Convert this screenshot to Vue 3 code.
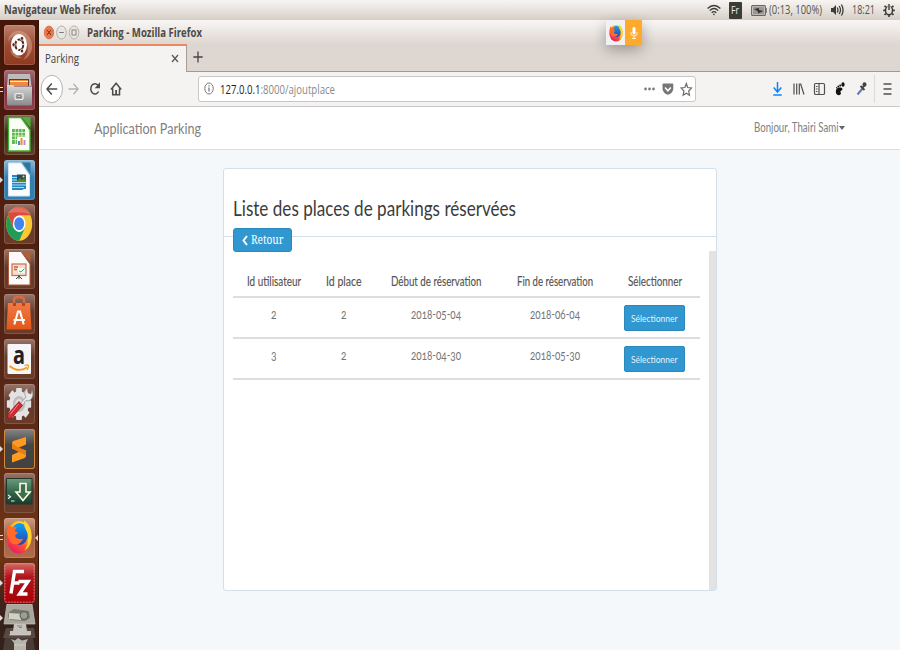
<script setup>
import { h } from 'vue'

// A line of real text set to an exact width, with its baseline at the font size.
// `lead` is an optional darker start of the same line.
const Fit = (p) =>
  h('svg', { class: 'fit', width: p.w, height: p.s * 1.3, style: { fontSize: p.s + 'px' } }, [
    h('text', { x: 0, y: p.s, textLength: p.w, lengthAdjust: 'spacingAndGlyphs', fill: 'currentColor' },
      p.lead ? [h('tspan', { fill: '#222' }, p.lead), p.t] : p.t),
  ])
Fit.props = ['t', 'w', 's', 'lead']

const headers = [
  { t: 'Id utilisateur', w: 54 },
  { t: 'Id place', w: 35.5 },
  { t: 'Début de réservation', w: 90.5 },
  { t: 'Fin de réservation', w: 76 },
  { t: 'Sélectionner', w: 54 },
]
const rows = [
  { user: '2', place: '2', start: '2018-05-04', end: '2018-06-04' },
  { user: '3', place: '2', start: '2018-04-30', end: '2018-05-30' },
]
const teeth = [0, 45, 90, 135, 180, 225, 270, 315]
</script>

<template>
  <div class="desktop">
    <svg class="defs" width="0" height="0">
      <defs>
        <linearGradient id="ffBody" x1="0.8" y1="0" x2="0.25" y2="1">
          <stop offset="0" stop-color="#fff044" /><stop offset=".35" stop-color="#ffb01e" />
          <stop offset=".65" stop-color="#ff4b38" /><stop offset="1" stop-color="#e3176c" />
        </linearGradient>
        <linearGradient id="ffGlobe" x1="0" y1="0" x2="0" y2="1">
          <stop offset="0" stop-color="#0aa5f5" /><stop offset="1" stop-color="#2b3fae" />
        </linearGradient>
        <linearGradient id="metal" x1="0" y1="0" x2="0" y2="1">
          <stop offset="0" stop-color="#d8d8d8" /><stop offset="1" stop-color="#898989" />
        </linearGradient>
        <linearGradient id="bag" x1="0" y1="0" x2="0" y2="1">
          <stop offset="0" stop-color="#f27a47" /><stop offset="1" stop-color="#e25718" />
        </linearGradient>
        <linearGradient id="term" x1="0" y1="0" x2="0" y2="1">
          <stop offset="0" stop-color="#6d9a7f" /><stop offset=".5" stop-color="#346b4c" /><stop offset="1" stop-color="#173c2b" />
        </linearGradient>
        <symbol id="firefox" viewBox="0 0 26 35" preserveAspectRatio="none">
          <ellipse cx="13" cy="18" rx="12.4" ry="16.2" fill="url(#ffBody)" />
          <ellipse cx="13.8" cy="14.4" rx="8.3" ry="11" fill="url(#ffGlobe)" />
          <path d="M1 15C1 9 2 7 3.5 4.5L5 8q3-1.500 6 0-2 1.500-2 4l3 1-3 3c1 4 5 4 8 3-1 5-8 8-12 4z" fill="#ff6a2b" />
          <path d="M18 1c6 4 8 10 7.500 17-.5 6-3 11-7 13 4-6 4-12 3-17-1-4-4-6-3.500-13z" fill="#ffd52d" />
        </symbol>
      </defs>
    </svg>

    <header class="panel">
      <Fit class="bold" t="Navigateur Web Firefox" :w="112" :s="12" />
      <div class="tray">
        <svg class="wifi" width="14" height="12" viewBox="0 0 14 12" fill="none" stroke="#3c3b37" stroke-width="1.300">
          <path d="M.6 4.500Q7-1.500 13.400 4.500M2.700 6.600Q7 2.500 11.300 6.600M4.700 8.700Q7 6.500 9.300 8.700" /><path d="M5.800 9.700h2.400L7 11.500z" fill="#3c3b37" stroke="none" />
        </svg>
        <span class="lang"><Fit t="Fr" :w="8" :s="11" /></span>
        <svg class="battery" width="16" height="11" viewBox="0 0 16 11">
          <rect x=".6" y=".6" width="13.800" height="9.800" rx="1" fill="#d6d2cd" stroke="#666" stroke-width="1.100" /><path d="M15 3v5" stroke="#666" stroke-width="1.500" />
          <rect x="2" y="2" width="11" height="7" fill="#9a9894" /><path d="M3 4l5-1v2l4.500 1L7 8.500V6.500z" fill="#333" />
        </svg>
        <Fit class="power" t="(0:13, 100%)" :w="53" :s="12" />
        <svg class="sound" width="14" height="14" viewBox="0 0 14 14" fill="none" stroke="#3c3b37" stroke-width="1.300">
          <path d="M1 5h2l3-3v10L3 9H1z" fill="#3c3b37" stroke="none" /><path d="M7.200 4.500q1.500 2.500 0 5M9.200 3q2.600 4 0 8M11.400 1.500q3.400 5.500 0 11" />
        </svg>
        <Fit class="clock" t="18:21" :w="23" :s="12" />
        <svg class="gear" width="12" height="14" viewBox="0 0 12 14" fill="none" stroke="#3c3b37">
          <ellipse cx="6" cy="7.400" rx="3.500" ry="4.300" stroke-width="1.500" />
          <path d="M6 12v2M2.800 10.500l-1.200 1.600M9.200 10.500l1.200 1.600M2 7.400H.2M10 7.400h1.800M2.800 4.300L1.600 2.700M9.200 4.300l1.200-1.600" stroke-width="1.600" />
          <path d="M6 1.500v4.500" stroke="#e5e0da" stroke-width="3.200" /><path d="M6 1v6" stroke-width="1.400" />
        </svg>
      </div>
    </header>

    <div class="workspace">
      <nav class="launcher">
        <div class="tile ubuntu">
          <svg viewBox="0 0 31 40">
            <path d="M4 17C5 4 19 2 26 13c5 9 1 19-7 22 7-7 6-17 0-22-5-5-12-3-15 4zM6 25c2 6 6 9 12 8-3-1-6-3-7-6z" fill="#d8a48d" opacity=".55" />
            <ellipse cx="15" cy="19.700" rx="8" ry="10.800" fill="#fff" />
            <ellipse cx="15.300" cy="19.700" rx="4" ry="5.300" fill="none" stroke="#54271b" stroke-width="2" stroke-dasharray="8.200 1.600" />
            <g fill="#54271b" stroke="#fff" stroke-width=".7"><ellipse cx="9.600" cy="19.700" rx="1.600" ry="2" /><ellipse cx="18" cy="13.400" rx="1.600" ry="2" /><ellipse cx="18" cy="26" rx="1.600" ry="2" /></g>
          </svg>
        </div>
        <div class="tile files">
          <svg viewBox="0 0 31 40">
            <path d="M4 4h22l1.500 12H3z" fill="#bcbcbc" /><path d="M5 9h20v7H5z" fill="#60382c" />
            <path d="M6 10h18v6H6z" fill="#ef8a3d" /><path d="M6 11.500h18" stroke="#fff0c0" />
            <path d="M3 15h6l1.500 1.500H28V34q0 1.500-1.500 1.500h-22Q3 35.500 3 34z" fill="url(#metal)" />
            <rect x="11" y="23.500" width="8" height="6" rx="1" fill="#aaa" stroke="#eee" stroke-width="1.200" /><path d="M13 26h4v1.500h-4z" fill="#fff" stroke="#555" stroke-width=".7" />
          </svg>
          <i class="pip double"></i>
        </div>
        <div class="tile calc">
          <svg viewBox="0 0 31 40">
            <path d="M4.500 2.500H17L26 15v21H4.500z" fill="#f8fff4" stroke="#43ae2d" stroke-width="1.300" /><path d="M18 2h8.500v11z" fill="#4caf37" />
            <path d="M8 14h13v15H8z" fill="#5fb84e" /><path d="M8 17.500h13M8 21h13M8 24.500h13M11.300 14v15M14.600 14v15M18 14v15" stroke="#e1f7dc" stroke-width=".8" />
            <path d="M13 22h9v8h-9z" fill="#fff" /><path d="M14 30v-4h2v4" fill="#3b8cd8" /><path d="M16.500 30v-7h2v7" fill="#f08a2b" /><path d="M19.500 30v-5h2v5" fill="#b98bd0" />
          </svg>
        </div>
        <div class="tile writer">
          <svg viewBox="0 0 31 40">
            <path d="M4.500 3H17l8.500 12v21h-21z" fill="#fbfcfd" stroke="#d3e4f0" /><path d="M18 2.500h8.500v11z" fill="#2a76a5" />
            <path d="M8 15h14v14H20l-2 1H8z" fill="#2588be" /><path d="M8 17.500h5M8 20h5M8 22.500h14M8 25h14M8 27.500h12" stroke="#d9effb" stroke-width=".8" />
            <path d="M13 14.500h8.500v7.500H13z" fill="#284f61" /><path d="M13 21l3-3 2 2 2-1.500 1.500 1.500v2H13z" fill="#578b28" /><circle cx="19.500" cy="16.500" r="1" fill="#ffd15d" />
          </svg>
          <i class="pip"></i>
        </div>
        <div class="tile glass">
          <svg viewBox="0 0 31 40">
            <g transform="translate(15.200 19.700) scale(.765 1)">
              <circle r="17" fill="#fac832" /><path d="M-14.700-8.500A17 17 0 0 1 14.700-8.500L0-8.500-7.400 4.200z" fill="#dd4a3b" />
              <path d="M-14.700-8.500A17 17 0 0 0 0 17L7.400 4.200 0 8.500-7.400 4.200z" fill="#1f9d58" />
              <circle r="8.300" fill="#fff" /><circle r="6.500" fill="#4383f0" />
            </g>
            <path d="M3 9Q15-3 27 10q-12-3-24-1z" fill="#fff" opacity=".2" />
          </svg>
        </div>
        <div class="tile glass">
          <svg viewBox="0 0 31 40">
            <path d="M4.500 2.500H17L26 15v21H4.500z" fill="#fcfaf8" stroke="#a65c3d" /><path d="M18 2h8.500v11z" fill="#b06037" />
            <rect x="8" y="15" width="14" height="11.500" fill="#f8ded0" stroke="#cc6a4a" stroke-width="1.200" /><path d="M10 18h4M10 20.500h3" stroke="#c0613d" stroke-width="1.300" />
            <path d="M14 19h7v5h-7z" fill="#f4fff4" /><path d="M15 22l2 1 3.500-3.500" stroke="#4aa868" fill="none" /><path d="M12 30l3-3 3 3M15 26v4" stroke="#444" fill="none" />
          </svg>
        </div>
        <div class="tile glass">
          <svg viewBox="0 0 31 40">
            <path d="M10 11V6q0-3 5-3t5 3v5" fill="none" stroke="#d86a42" stroke-width="2.500" /><path d="M4 9h22l1.500 26.500h-25z" fill="url(#bag)" /><path d="M9 9h3v3H9zM18 9h3v3h-3z" fill="#b94417" />
            <path d="M10.300 30.500L14 17.500h2l3.700 13M9.500 26h11.500" fill="none" stroke="#fff" stroke-width="2" />
          </svg>
        </div>
        <div class="tile glass">
          <svg class="amazon" viewBox="0 0 31 40">
            <rect x="3.500" y="5" width="23.500" height="30" rx="1" fill="#f6f6f6" />
            <text x="9" y="25" font-family="Open Sans" font-weight="700" font-size="25" textLength="12" lengthAdjust="spacingAndGlyphs" fill="#222">a</text>
            <path d="M5.500 27Q14 34 23 28.500" fill="none" stroke="#f79a1c" stroke-width="1.800" /><path d="M20.500 26.500q4-1.500 4 .5t-1.500 4" fill="none" stroke="#f79a1c" stroke-width="1.300" />
          </svg>
        </div>
        <div class="tile glass">
          <svg viewBox="0 0 31 40">
            <g transform="translate(15 20) scale(.76 1)" fill="#e2e2e2"><rect v-for="a in teeth" :key="a" x="-3.800" y="-16" width="7.600" height="8" rx="1" :transform="`rotate(${a})`" /><circle r="13" /><circle r="8" fill="#bdbdbd" /><circle r="5" fill="#dfdfdf" /></g>
            <path d="M15 21l7-8q-3-5 1-9l1 5 3 1 1-4q3 7-3 11l-3-.5-5 7z" fill="#e7e7e7" stroke="#888" stroke-width=".7" />
            <path d="M15 17.500l3.500 4L7.500 34q-3 2-4-1-.5-2 1-3.500z" fill="#d12b32" stroke="#941820" stroke-width=".8" /><path d="M14.500 20L6 30.500" stroke="#ff8888" />
          </svg>
        </div>
        <div class="tile sublime">
          <svg viewBox="0 0 31 40"><path d="M22 8v7.500l-7.500 3.300L22 21.500V27q0 1.500-2 2.200L8 33.500V26l7.500-3.500L8 19.500V14q0-1.500 2-2.300z" fill="#ff9b20" /><path d="M8 19.500l14 7v-5l-7.500-2.700L8 14z" fill="#e87d12" /></svg>
          <i class="pip"></i>
        </div>
        <div class="tile glass">
          <svg viewBox="0 0 31 40">
            <path d="M2.500 5.500h25.500V31H2.500z" fill="url(#term)" stroke="#23382b" /><path d="M4 22l2.500 1.800L4 25.700M7 28h3.500" fill="none" stroke="#e8eee9" stroke-width="1.200" />
            <path d="M16 10.500h6v8.500h4L19 27.500 12 19h4z" fill="#3d6e50" stroke="#fffde2" stroke-width="1.600" />
          </svg>
        </div>
        <div class="tile fox">
          <svg viewBox="0 0 31 40"><use href="#firefox" x="2" y="1.500" width="26" height="35" /></svg>
          <i class="pip double"></i><i class="pip right"></i>
        </div>
        <div class="tile zilla">
          <svg viewBox="0 0 31 40">
            <rect x="1" y="1" width="29" height="38" rx="2" fill="none" stroke="#e78a8a" stroke-width=".8" stroke-dasharray="1.500 1.500" />
            <path d="M7 30.500L10.500 8.500H20M8.500 20h7M14.500 18.500H24L15.500 31H23.500" fill="none" stroke="#fff" stroke-width="3.400" />
          </svg>
          <i class="pip"></i>
        </div>
        <div class="stack">
          <svg width="35" height="46" viewBox="0 0 35 46">
            <path d="M5 0h25l3 20H2z" fill="#aaa69d" stroke="#c9c5ba" stroke-width=".7" /><path d="M7 8l5-3 15 2 1 7-5 3-15-1-2-4z" fill="#777a6d" /><path d="M7 9l14 1-2 6-12-1z" fill="#d0d1c4" /><ellipse cx="22" cy="11.500" rx="4" ry="4" fill="#9b9f90" stroke="#575b50" />
            <path d="M4 24h28l1.500 10H1z" fill="#776963" opacity=".55" /><path d="M12 20h12l1 7h4v4H8v-4h3z" fill="#c6c2bc" /><path d="M15 22h5M17 23.500h3" stroke="#777" stroke-width=".8" /><path d="M3 34h28l2 12H1z" fill="#4b3b36" />
            <path d="M9 35l4 1.500 3-2.500 4 2.500 6-1.500-2 4v7H12v-7z" fill="#b8b4ae" /><path d="M7 31h21M12 41h12" stroke="#ddd" opacity=".6" />
          </svg>
          <i class="pip"></i>
        </div>
      </nav>

      <section class="browser">
        <div class="titlebar">
          <svg width="42" height="16" viewBox="0 0 42 16">
            <g stroke="#b9b0a6" fill="#e9e5e0"><ellipse cx="7" cy="8.500" rx="4.700" ry="6.400" fill="#ef7446" stroke="#cf7c5e" /><ellipse cx="19.500" cy="8.500" rx="4.800" ry="6.500" /><ellipse cx="32" cy="8.500" rx="4.800" ry="6.500" /></g>
            <path d="M5.100 6l3.800 5M8.900 6l-3.800 5" stroke="#703622" /><path d="M17.300 8.500h4.500" stroke="#777" /><rect x="30" y="6" width="4" height="5" fill="none" stroke="#888" />
          </svg>
          <Fit class="bold title" t="Parking - Mozilla Firefox" :w="115" :s="12" />
        </div>
        <div class="tabs">
          <div class="tab">
            <Fit t="Parking" :w="34" :s="12" />
            <svg width="8" height="9" viewBox="0 0 8 9"><path d="M1 1l6 7M7 1L1 8" stroke="#555" stroke-width="1.200" /></svg>
          </div>
          <div class="strip"><svg width="10" height="12" viewBox="0 0 10 12"><path d="M5 .5v11M.3 6h9.400" stroke="#444" stroke-width="1.300" /></svg></div>
        </div>
        <div class="toolbar">
          <svg class="navicons" width="86" height="30" viewBox="0 0 86 30" fill="none" stroke="#4c4c4e" stroke-width="1.500">
            <ellipse cx="12.800" cy="15" rx="10.700" ry="13.700" fill="#fff" stroke="#b5b2b0" stroke-width="1" />
            <path d="M18.200 15H8M12.800 9.500L8 15l4.800 5.500" /><path d="M29.500 15h9.500M34.500 9.800l4.600 5.200-4.600 5.200" stroke="#b4b3b3" stroke-width="1.300" />
            <path d="M59.600 17.500A4.200 5.200 0 1 1 59 11.200" /><path d="M61 8.300v6h-5.300z" fill="#4c4c4e" stroke="none" />
            <path d="M72 15.500l5.100-6.300 5.100 6.300M73.700 14.500v6.200h6.800v-6.200" stroke-width="1.500" /><path d="M77.100 21v-5" stroke-width="1.800" />
          </svg>
          <div class="url">
            <svg width="10" height="13" viewBox="0 0 10 13" fill="none" stroke="#777"><ellipse cx="5" cy="6.500" rx="4.200" ry="5.500" /><path d="M5 5.500v4M5 3.200v1.300" stroke-width="1.300" /></svg>
            <Fit class="address" lead="127.0.0.1" t=":8000/ajoutplace" :w="115" :s="12" />
            <svg class="urlicons" width="50" height="16" viewBox="0 0 50 16">
              <g fill="#777"><ellipse cx="2.500" cy="8" rx="1.300" ry="1.400" /><ellipse cx="6.500" cy="8" rx="1.300" ry="1.400" /><ellipse cx="10.500" cy="8" rx="1.300" ry="1.400" /><path d="M20.500 2.500h8.800q1 0 1 1V8q-.8 4.500-5.400 5.700Q20.300 12.500 19.500 8V3.500q0-1 1-1z" /></g>
              <path d="M22 6.500l2.900 3.300 2.900-3.300" stroke="#fff" stroke-width="1.500" fill="none" /><path d="M43.300 2.500l1.400 4 3.800.5-2.800 3 .8 4.300-3.200-2.100-3.200 2.100.8-4.300-2.800-3 3.800-.5z" stroke="#6c6c6c" stroke-width="1.200" fill="none" />
            </svg>
          </div>
          <svg class="tools" width="126" height="30" viewBox="0 0 126 30" fill="none" stroke="#505052" stroke-width="1.200">
            <path d="M8.500 8v9.500M4.700 13.500l3.800 4.500 3.800-4.500M4.300 21h8.400" stroke="#0a84ff" stroke-width="1.500" />
            <path d="M25 9.500v11M27.700 9.500v11M30.300 9.500v11M31.500 9.500l3.500 11" stroke-width="1.200" />
            <rect x="45.500" y="9.500" width="10" height="11" rx="1.300" /><path d="M50 9.500v11M47 12.500h1.500M47 15h1.500M47 17.500h1.500" />
            <g fill="#111" stroke="none"><path d="M67.500 15c2.500-2.500 6-1.500 6 0s-2 1.500-2.200 3c1 .2 1 3.200-1.500 3.200-3 0-3.600-4-2.300-6.200z" /><ellipse cx="74" cy="10.500" rx="1.600" ry="2.200" /><circle cx="71.200" cy="11.500" r="1" /><circle cx="69.300" cy="12.500" r=".9" /><circle cx="67.700" cy="13.700" r=".7" /></g>
            <path d="M88.500 20.500l5-6" stroke="#6675bb" stroke-width="2" /><path d="M91.500 12l4 4M93.500 14l2.500-3.500" stroke="#444" stroke-width="1.800" /><ellipse cx="95.500" cy="10.500" rx="2" ry="2.300" fill="#444" stroke="none" />
            <path d="M105.500 1v28" stroke="#dedcdb" /><path d="M114.500 10h8M114.500 15h8M114.500 20h8" stroke-width="1.500" />
          </svg>
        </div>

        <div class="sitebar">
          <Fit t="Application Parking" :w="107" :s="15.500" />
          <div class="user"><Fit t="Bonjour, Thairi Sami" :w="84.500" :s="12.500" /><i class="caret"></i></div>
        </div>
        <main class="page">
          <article class="card">
            <div class="cardhead"><Fit t="Liste des places de parkings réservées" :w="283" :s="20.500" /></div>
            <div class="cardbody">
              <div class="content">
                <button class="back"><svg width="6" height="11" viewBox="0 0 6 11"><path d="M5 1L1.500 5.500 5 10" fill="none" stroke="#fff" stroke-width="2" /></svg><Fit t="Retour" :w="32.500" :s="12" /></button>
                <div class="row head"><Fit v-for="c in headers" :key="c.t" :t="c.t" :w="c.w" :s="12.600" /></div>
                <div v-for="r in rows" :key="r.user" class="row">
                  <Fit :t="r.user" :w="5.500" :s="13.500" /><Fit :t="r.place" :w="5.500" :s="13.500" />
                  <Fit :t="r.start" :w="50" :s="13.500" /><Fit :t="r.end" :w="50" :s="13.500" />
                  <button class="select"><Fit t="Sélectionner" :w="46.500" :s="9.500" /></button>
                </div>
              </div>
              <div class="scroll"></div>
            </div>
          </article>
        </main>
      </section>
    </div>

    <div class="sharing">
      <div class="foxcell"><svg width="14" height="18"><use href="#firefox" width="14" height="18" /></svg></div>
      <div class="mic"><svg width="8" height="14" viewBox="0 0 8 14"><rect x="2.500" y="1" width="3" height="7.500" rx="1.500" fill="#fff" /><path d="M1 6v1.500q0 2.500 3 2.500t3-2.500V6M4 10v3M2 12.500h4" fill="none" stroke="#fff" stroke-width=".8" /></svg></div>
    </div>
  </div>
</template>

<style>
body { overflow: hidden; }
</style>

<style scoped>
* { box-sizing: border-box; }
.desktop { position: relative; width: 900px; height: 650px; overflow: hidden; display: flex; flex-direction: column; font-family: "Open Sans", "Noto Sans", sans-serif; color: #3c3b37; }
.defs { position: absolute; }
.fit { display: block; overflow: visible; flex: none; }
svg { flex: none; }
.bold { font-weight: 700; color: #4c4a46; }
.panel { height: 20px; flex: none; display: flex; justify-content: space-between; padding: 2px 5px 0 4px; background: linear-gradient(#f7f5f2, #e6e1dc 55%, #d6cec6); }
.tray { display: flex; align-items: flex-start; color: #55534f; }
.wifi { margin-top: 2px; }
.lang { width: 13px; height: 17px; margin: 0 9.500px 0 8px; padding: 1px 2.500px; background: #3c3b37; color: #eee; border-radius: 1px; }
.battery { margin-top: 3px; }
.power { margin-left: 2px; }
.sound { margin: 1px 0 0 8px; }
.clock { margin-left: 8px; }
.gear { margin: 1px 0 0 8px; }
.workspace { display: flex; height: 630px; }
.launcher { width: 39px; padding: 5px 0 0 4px; display: flex; flex-direction: column; gap: 4.85px; background: linear-gradient(#431609, #4c1c0e 20%, #572817 60%, #713413 85%, #3f241b 92%, #30201b); border-right: 1px solid #351309; }
.tile { position: relative; width: 31px; height: 40px; flex: none; border-radius: 3px; box-shadow: inset 0 0 0 1px #ffffff24; }
.tile > svg { display: block; width: 31px; height: 40px; }
.amazon { overflow: visible; }
.ubuntu { background: linear-gradient(#bc806c, #9c4b32 50%, #8e3a20); }
.files { background: linear-gradient(#a36b70, #7c3140 50%, #91404c); }
.calc { background: linear-gradient(#806657, #3d3018 45%, #5d402a); }
.writer { background: linear-gradient(#8bb9d5, #367fae 45%, #2f80b2); }
.glass { background: linear-gradient(#9a7468, #633a2b 45%, #6d3b28); }
.sublime { background: linear-gradient(#858585, #454545 40%, #414141); box-shadow: inset 0 0 0 1px #d18a39; }
.fox { background: linear-gradient(#cc9a80, #a15f42 45%, #b16e4d); }
.zilla { background: linear-gradient(#d66967, #af151a 35%, #a90008); }
.pip { position: absolute; left: -4px; top: 17px; border: 3px solid transparent; border-left-color: #ddd; border-right-width: 0; }
.double { width: 3px; height: 5px; border: 1px solid #ddd; border-width: 1px 0; }
.right { left: 31px; border-width: 3px 3px 3px 0; border-right-color: #ddd; }
.stack { position: relative; margin: -4px 0 0 -2px; height: 46px; flex: none; }
.stack .pip { left: -2px; top: 11px; }
.browser { width: 861px; display: flex; flex-direction: column; }
.titlebar { height: 24px; display: flex; padding: 4px 0 0 4px; background: linear-gradient(#f8f6f4, #ded7d1); }
.titlebar > svg { margin-left: -1px; }
.titlebar > .title { margin: 1px 0 0 3px; }
.tabs { height: 28px; display: flex; background: #ded7d1; }
.tab { width: 148px; display: flex; align-items: flex-start; justify-content: space-between; padding: 5px 7px 0 6px; background: #f4f3f2; border-top: 2px solid #ed875f; border-right: 1px solid #a69d94; color: #444; }
.tab > svg:last-child { margin-top: 3px; }
.strip { flex: 1; padding: 7px 0 0 6px; border-bottom: 1px solid #a39a8f; }
.strip svg { display: block; }
.toolbar { height: 35px; display: flex; align-items: flex-start; padding-top: 2px; background: #f4f3f2; border-bottom: 1px solid #cbc9c8; }
.url { width: 498px; height: 26px; margin: 2px 0 0 72.500px; padding: 0 2px 0 5px; display: flex; align-items: flex-start; background: #fff; border: 1px solid #c9c7c5; border-radius: 3px; color: #8a8a8a; }
.url > svg:first-child { margin-top: 5px; }
.url > .address { margin: 5px 0 0 6px; }
.url > .urlicons { margin: 4px 0 0 auto; }
.tools { margin-left: 73px; }
.sitebar { height: 43px; flex: none; display: flex; justify-content: space-between; padding: 11px 55px 0 55px; background: #fff; border-bottom: 1px solid #d3e0e9; font-family: Lato, sans-serif; color: #808080; }
.user { display: flex; padding-top: 1px; gap: 1px; }
.caret { width: 6px; height: 4px; margin-top: 7px; border: 3px solid transparent; border-top: 4px solid #666; border-bottom: 0; }
.page { flex: 1; padding: 18px 0 0 184px; background: #f5f8fa; font-family: Lato, sans-serif; }
.card { width: 494px; height: 423px; display: flex; flex-direction: column; background: #fff; border: 1px solid #d3e0e9; border-radius: 3px; }
.cardhead { height: 68px; flex: none; padding: 26px 0 0 9px; border-bottom: 1px solid #d3e0e9; color: #3c3c3c; }
.cardbody { flex: 1; display: flex; justify-content: space-between; padding-left: 9px; }
.content { width: 467px; margin-top: -9px; }
.back { width: 59px; height: 24px; padding: 4px 0 0 8px; display: flex; gap: 3px; align-items: flex-start; background: #3097d1; border: 1px solid #2a88bd; border-radius: 3px; color: #fff; font-family: "Noto Serif", "DejaVu Serif", serif; }
.back > svg { margin-top: 2px; }
.back > .fit { margin-top: -1px; }
.row { display: grid; grid-template-columns: 82px 57px 128px 109px 91px; justify-items: center; align-items: start; height: 40.700px; padding-top: 7px; border-bottom: 2px solid #ddd; color: #757575; font-variant-numeric: oldstyle-nums; }
.head { height: 46.400px; padding-top: 21px; color: #555; }
.head > .fit { stroke: #555; stroke-width: .15px; }
.select { width: 61px; height: 26px; padding: 6px; background: #3097d1; border: 1px solid #2a88bd; border-radius: 2px; color: #e4f3fb; font-family: Lato, sans-serif; }
.scroll { width: 7px; margin-top: 14px; background: #e3e3e3; }
.sharing { position: absolute; left: 606px; top: 20px; width: 36px; height: 25px; display: flex; box-shadow: 0 5px 14px #0000004d; }
.foxcell, .mic { display: flex; align-items: center; justify-content: center; }
.foxcell { width: 19px; background: #f1f0f2; }
.mic { width: 17px; background: #ffa92d; }
</style>
